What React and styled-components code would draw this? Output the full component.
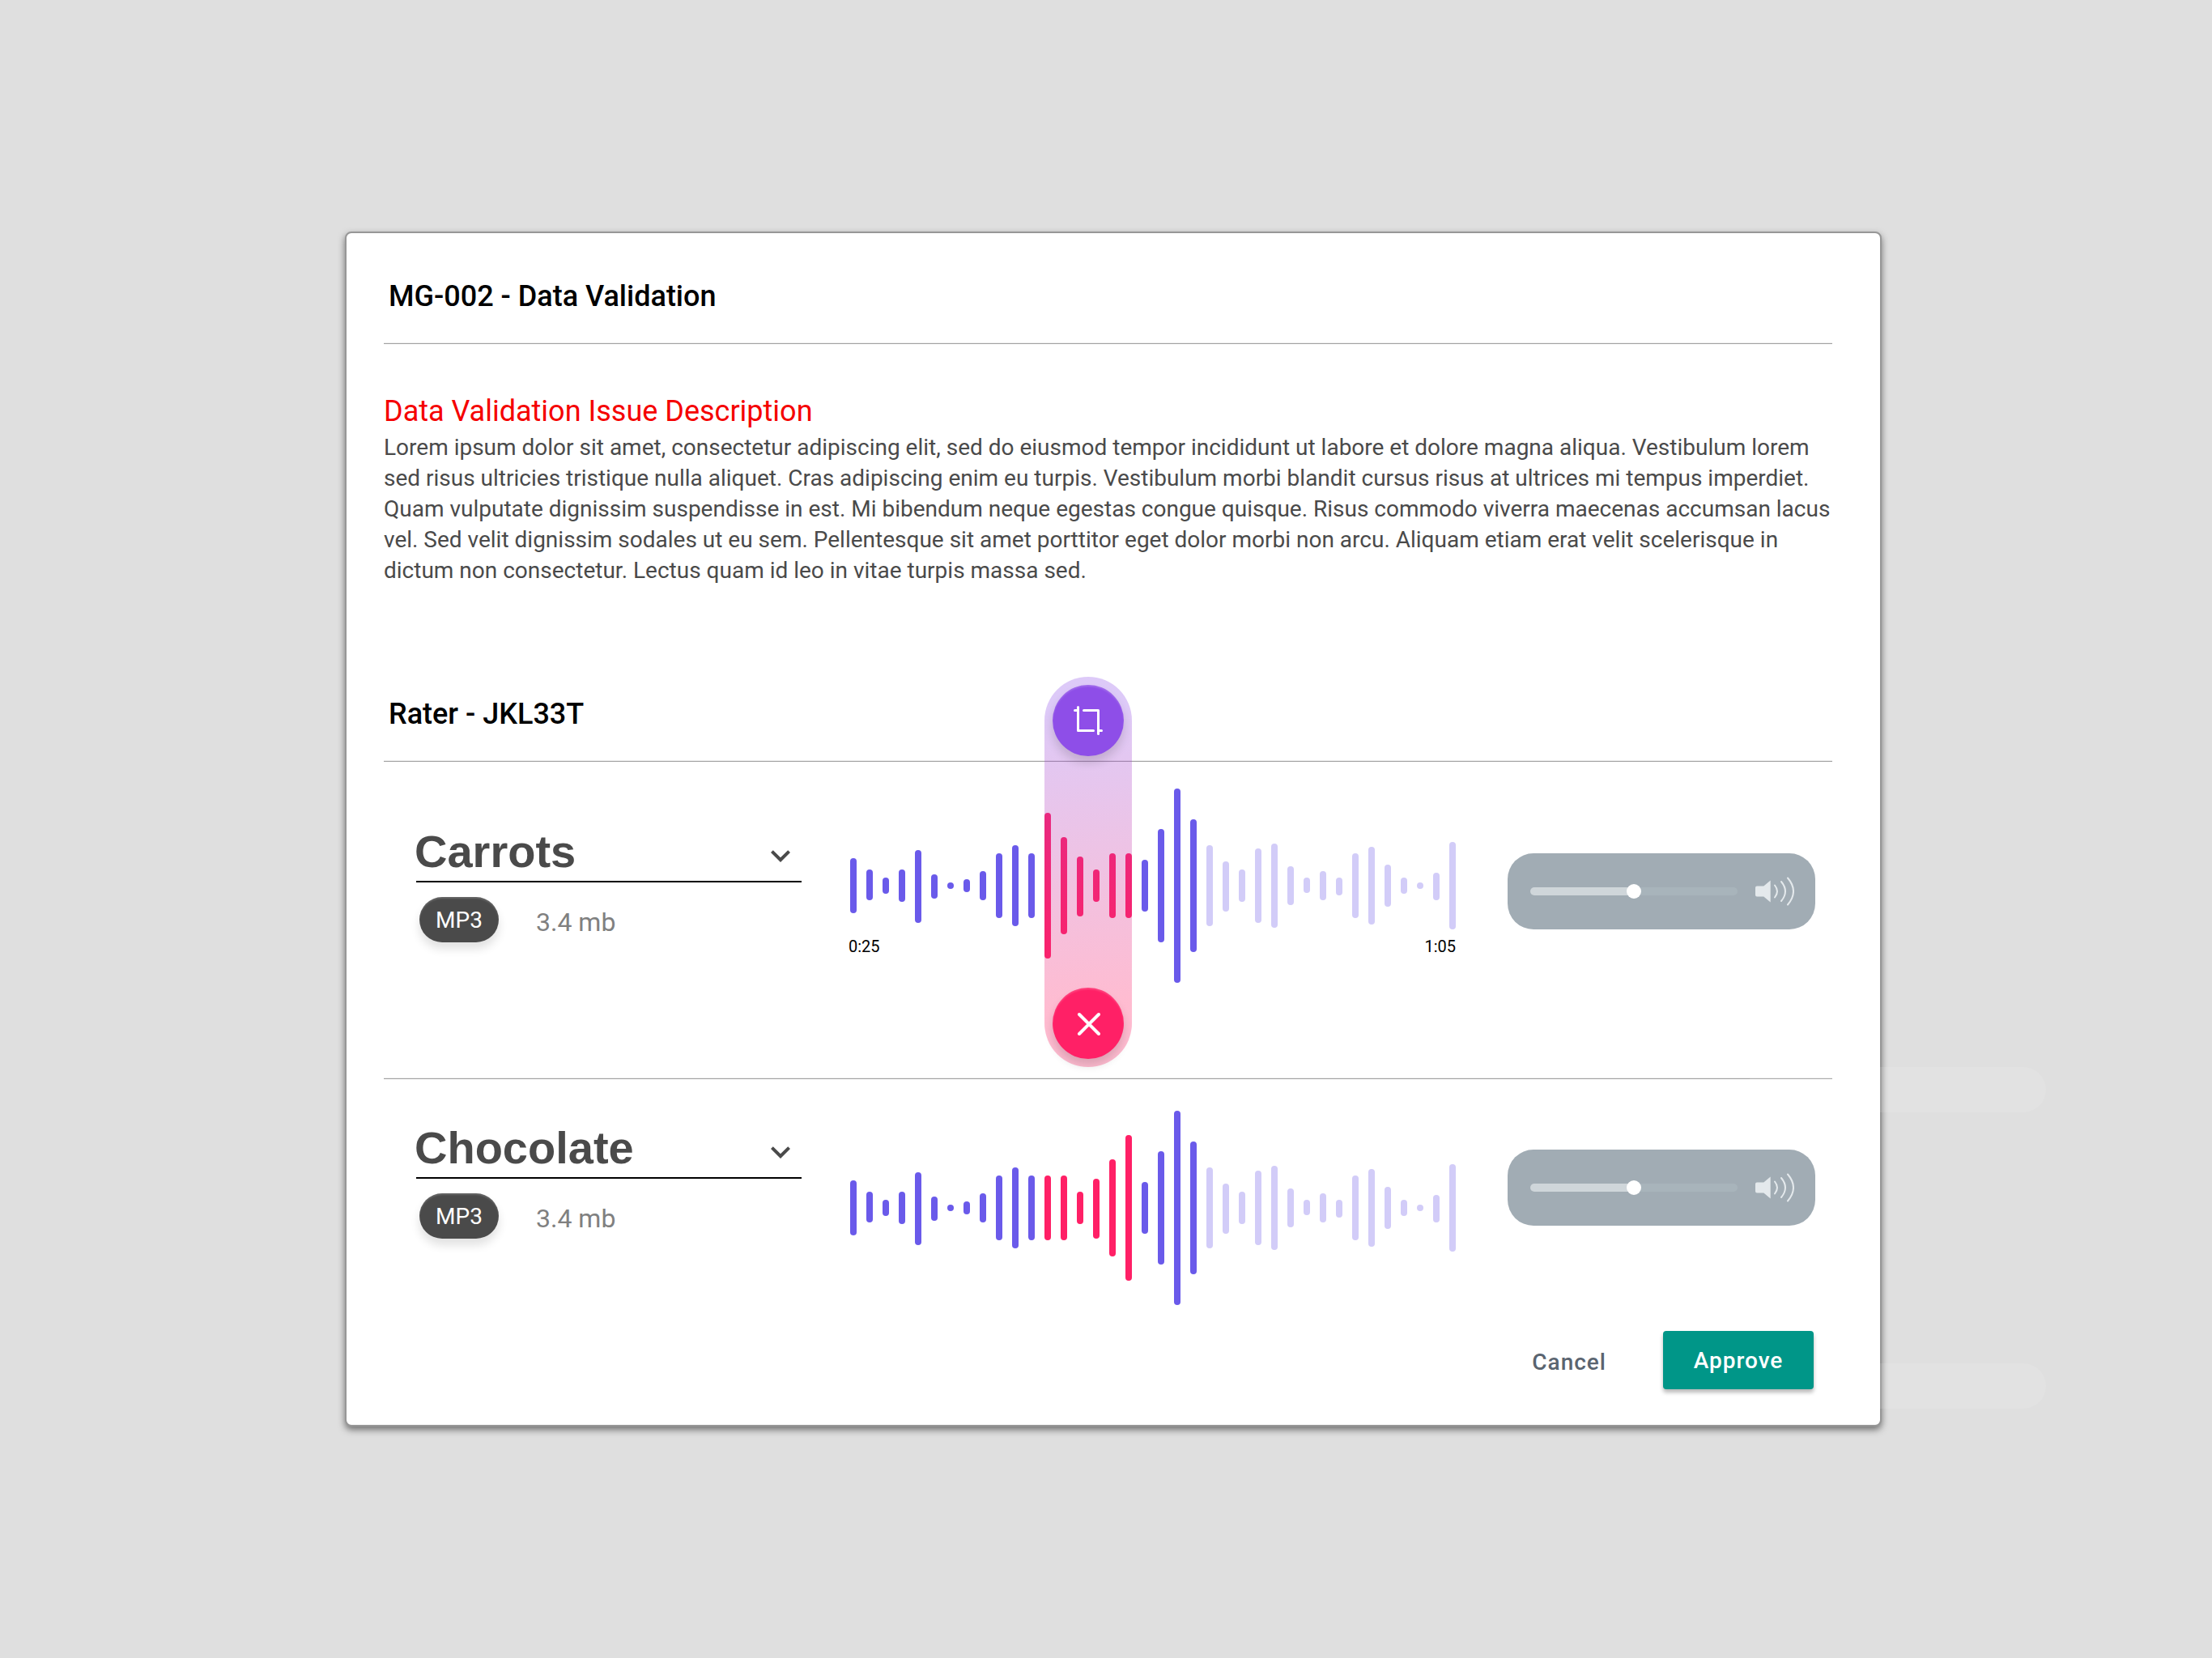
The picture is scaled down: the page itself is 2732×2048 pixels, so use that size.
import React, { useState } from "react";
import styled, { createGlobalStyle, css } from "styled-components";

const GlobalStyle = createGlobalStyle`
  *, *::before, *::after { box-sizing: border-box; }
  body {
    margin: 0;
    background: #dfdfdf;
    font-family: Roboto, "Liberation Sans", sans-serif;
    color: #4a4a4a;
  }
  h1, h2, p { margin: 0; }
`;

const Page = styled.main`
  min-height: 100vh;
  padding: 286px 408px 286px 426px;
`;

const Dialog = styled.section`
  display: flex;
  flex-direction: column;
  padding: 56px 59px 44px 46px;
  background: #fff;
  border: 2px solid #979797;
  border-radius: 8px;
  box-shadow: 0 4px 8px rgba(0, 0, 0, 0.5);
`;

const ruled = css`
  border-bottom: 1px solid #a2a2a2;
  box-shadow: inset 0 -1px 0 #ececec;
`;

const SectionTitle = styled.h1`
  padding: 0 6px 36px;
  font-size: 36px;
  line-height: 44px;
  font-weight: 500;
  color: #000;
  ${ruled}
`;

const Issue = styled.section`
  display: flex;
  flex-direction: column;
  gap: 4px;
  padding: 61px 0 136px;
`;

const IssueTitle = styled.h2`
  font-size: 36px;
  line-height: 44px;
  font-weight: 400;
  color: #f50000;
`;

const IssueText = styled.p`
  font-size: 28px;
  line-height: 38px;
`;

const TrackList = styled.div`
  display: flex;
  flex-direction: column;
`;

const Track = styled.article`
  display: grid;
  grid-template-columns: minmax(0, 1fr) 756px 380px;
  align-items: start;
  column-gap: 58px;
  padding: 39px 21px 0 40px;
  --side-inset: 14px;

  ${(p) =>
    p.$editing &&
    css`
      padding-top: 33px;
      padding-bottom: 118px;
      --side-inset: 46px;
      ${ruled}
    `}
`;

const TrackInfo = styled.div`
  display: flex;
  flex-direction: column;
  gap: 18px;
  padding-top: var(--side-inset);
`;

const Field = styled.label`
  display: grid;
  grid-template-columns: minmax(0, 1fr);
  border-bottom: 2px solid #000;
`;

const FoodSelect = styled.select`
  grid-area: 1 / 1;
  height: 68px;
  margin: 0 0 0 -2px;
  padding: 0 0 4px;
  appearance: none;
  border: 0;
  border-radius: 0;
  background: transparent;
  color: #4a4a4a;
  font: bold 56px/64px "Liberation Sans", Arial, sans-serif;
`;

const Chevron = styled.svg`
  grid-area: 1 / 1;
  place-self: end;
  width: 48px;
  height: 48px;
  margin: 0 2px 7px 0;
  fill: #4a4a4a;
  pointer-events: none;
`;

const Meta = styled.div`
  display: flex;
  gap: 46px;
  padding-left: 4px;
`;

const Badge = styled.span`
  display: flex;
  align-items: center;
  justify-content: center;
  width: 98px;
  height: 56px;
  border-radius: 28px;
  background: #4a4a4a;
  color: #fff;
  font-size: 28px;
  box-shadow: 0 8px 12px rgba(0, 0, 0, 0.12), inset 0 2px 2px rgba(255, 255, 255, 0.16);
`;

const FileSize = styled.span`
  padding-top: 3px;
  font-size: 32px;
  line-height: 56px;
  color: #808080;
`;

const Stage = styled.div`
  position: relative;
  display: grid;
  padding-right: 4px;
`;

const Wave = styled.svg`
  grid-area: 1 / 1;
  display: block;
  width: 748px;
  height: 240px;
  margin: 0 2px;
`;

const Times = styled.div`
  grid-area: 1 / 1;
  align-self: end;
  display: flex;
  justify-content: space-between;
  padding: 0 2px 33px 0;
  font-size: 20px;
  line-height: 24px;
  color: #000;
`;

const Selection = styled.div`
  position: absolute;
  top: -138px;
  left: ${(p) => p.$from * 20 + 2}px;
  width: ${(p) => p.$bars * 20 - 12}px;
  height: 482px;
  display: flex;
  flex-direction: column;
  align-items: center;
  justify-content: space-between;
  padding: 10px 0;
  border-radius: 54px;
  background: linear-gradient(175deg, rgba(142, 78, 232, 0.3) 8%, rgba(255, 32, 101, 0.3) 84%);
`;

const RoundButton = styled.button`
  display: grid;
  place-items: center;
  width: 88px;
  height: 88px;
  padding: 0;
  border: 0;
  border-radius: 50%;
  background: ${(p) => p.$color};
  box-shadow: 0 8px 12px rgba(0, 0, 0, 0.14), inset 0 2px 2px rgba(255, 255, 255, 0.16);

  svg {
    display: block;
    fill: none;
    stroke: #fff;
    stroke-linecap: round;
    stroke-linejoin: round;
  }
`;

const VolumeColumn = styled.div`
  position: relative;
  margin-top: calc(var(--side-inset) + 34px);

  &::after {
    content: "";
    position: absolute;
    top: 264px;
    left: 295px;
    width: 370px;
    height: 56px;
    border-radius: 28px;
    background: rgba(255, 255, 255, 0.1);
    pointer-events: none;
  }
`;

const Volume = styled.label`
  display: flex;
  align-items: center;
  gap: 22px;
  height: 94px;
  padding: 0 26px 0 28px;
  border-radius: 32px;
  background: #a1acb4;
`;

const Slider = styled.input`
  flex: 1;
  min-width: 0;
  height: 18px;
  margin: 0;
  appearance: none;
  background: transparent;

  &::-webkit-slider-runnable-track {
    height: 10px;
    border-radius: 5px;
    background: linear-gradient(
      to right,
      #cfd6da ${(p) => p.value}%,
      #a8b4bb ${(p) => p.value}%
    );
  }

  &::-webkit-slider-thumb {
    appearance: none;
    width: 18px;
    height: 18px;
    margin-top: -4px;
    border-radius: 50%;
    background: #fff;
  }
`;

const Footer = styled.footer`
  position: relative;
  display: flex;
  align-items: flex-end;
  justify-content: flex-end;
  gap: 38px;
  padding: 32px 23px 0 0;
`;

const TextButton = styled.button`
  height: 68px;
  padding: 2px 32px 0;
  border: 0;
  background: transparent;
  color: #5a6470;
  font: 500 28px/32px Roboto, sans-serif;
  letter-spacing: 1px;
`;

const PrimaryButton = styled(TextButton)`
  width: 186px;
  height: 72px;
  border-radius: 4px;
  background: #009688;
  color: #fff;
  box-shadow: 0 4px 5px rgba(0, 0, 0, 0.28);
`;

const lead = [
  [86, 68], [100, 38], [110, 20], [100, 40], [76, 90], [106, 30],
  [116, 8], [112, 16], [102, 36], [80, 80], [70, 100], [80, 80],
];
const tail = [
  [88, 64], [50, 140], [0, 240], [38, 164], [70, 100], [90, 62], [100, 40],
  [74, 92], [68, 104], [96, 48], [110, 19], [102, 36], [110, 22], [80, 80],
  [72, 96], [94, 52], [110, 20], [116, 8], [104, 34], [66, 108],
];

const tracks = [
  {
    id: "carrots",
    food: "Carrots",
    format: "MP3",
    size: "3.4 mb",
    start: "0:25",
    end: "1:05",
    marked: [[30, 180], [60, 120], [84, 74], [100, 40], [80, 80], [80, 80]],
    editing: true,
  },
  {
    id: "chocolate",
    food: "Chocolate",
    format: "MP3",
    size: "3.4 mb",
    marked: [[80, 80], [80, 80], [100, 40], [84, 74], [60, 120], [30, 180]],
    editing: false,
  },
];

const MARK_START = lead.length;
const PLAYED_END = 22;

function barColor(index, markEnd) {
  if (index >= MARK_START && index < markEnd) return "#ff2066";
  return index < PLAYED_END ? "#6a5aea" : "#d2ccf8";
}

function WaveForm({ marked, label }) {
  const bars = [...lead, ...marked, ...tail];
  const markEnd = MARK_START + marked.length;
  return (
    <Wave viewBox="0 0 748 240" role="img" aria-label={label}>
      {bars.map(([y, height], i) => (
        <rect key={i} x={i * 20} y={y} width="8" height={height} rx="4" fill={barColor(i, markEnd)} />
      ))}
    </Wave>
  );
}

function SpeakerIcon() {
  return (
    <svg width="48" height="36" viewBox="0 0 48 36" aria-hidden="true">
      <path
        d="M2 11.500h8.300L18.700 4.500V31.500L10.300 24.500H2Q0 24.500 0 22.500V13.500Q0 11.500 2 11.500Z"
        fill="#e4e9ec"
      />
      <g fill="none" stroke="#e4e9ec" strokeWidth="2" strokeLinecap="round">
        <path d="M24 10.500Q30 18 24 25.500" />
        <path d="M32 6Q42 18 32 30" />
        <path d="M40 1.500Q54 18 40 34.500" />
      </g>
    </svg>
  );
}

function TrackRow({ track }) {
  const [food, setFood] = useState(track.food);
  const [volume, setVolume] = useState(50);
  return (
    <Track $editing={track.editing}>
      <TrackInfo>
        <Field htmlFor={`${track.id}-food`}>
          <FoodSelect
            id={`${track.id}-food`}
            aria-label="Food item"
            value={food}
            onChange={(e) => setFood(e.target.value)}
          >
            <option>Carrots</option>
            <option>Chocolate</option>
          </FoodSelect>
          <Chevron viewBox="0 0 24 24" aria-hidden="true">
            <path d="M16.590 8.590L12 13.170 7.410 8.590 6 10l6 6 6-6z" />
          </Chevron>
        </Field>
        <Meta>
          <Badge>{track.format}</Badge>
          <FileSize>{track.size}</FileSize>
        </Meta>
      </TrackInfo>

      <Stage>
        <WaveForm marked={track.marked} label={`${food} wave form`} />
        {track.editing && (
          <>
            <Times>
              <span>{track.start}</span>
              <span>{track.end}</span>
            </Times>
            <Selection $from={MARK_START} $bars={track.marked.length}>
              <RoundButton type="button" $color="#8e4ee8" aria-label="Crop selection">
                <svg width="36" height="36" viewBox="0 0 36 36" strokeWidth="3">
                  <path d="M5.500 1.500V30.500H24.500M1.500 5.500H5.500M12.500 5.500H30.500V34.500M30.500 30.500H34.500" />
                </svg>
              </RoundButton>
              <RoundButton type="button" $color="#ff2066" aria-label="Remove selection">
                <svg width="30" height="30" viewBox="0 0 30 30" strokeWidth="4">
                  <path d="M4 4L28 28M28 4L4 28" />
                </svg>
              </RoundButton>
            </Selection>
          </>
        )}
      </Stage>

      <VolumeColumn>
        <Volume htmlFor={`${track.id}-volume`}>
          <Slider
            id={`${track.id}-volume`}
            type="range"
            min="0"
            max="100"
            aria-label="Volume"
            value={volume}
            onChange={(e) => setVolume(Number(e.target.value))}
          />
          <SpeakerIcon />
        </Volume>
      </VolumeColumn>
    </Track>
  );
}

export default function App() {
  return (
    <>
      <GlobalStyle />
      <Page>
        <Dialog>
          <SectionTitle>MG-002 - Data Validation</SectionTitle>
          <Issue>
            <IssueTitle>Data Validation Issue Description</IssueTitle>
            <IssueText>
              Lorem ipsum dolor sit amet, consectetur adipiscing elit, sed do eiusmod tempor
              incididunt ut labore et dolore magna aliqua. Vestibulum lorem sed risus ultricies
              tristique nulla aliquet. Cras adipiscing enim eu turpis. Vestibulum morbi blandit
              cursus risus at ultrices mi tempus imperdiet. Quam vulputate dignissim suspendisse
              in est. Mi bibendum neque egestas congue quisque. Risus commodo viverra maecenas
              accumsan lacus vel. Sed velit dignissim sodales ut eu sem. Pellentesque sit amet
              porttitor eget dolor morbi non arcu. Aliquam etiam erat velit scelerisque in dictum
              non consectetur. Lectus quam id leo in vitae turpis massa sed.
            </IssueText>
          </Issue>
          <SectionTitle as="h2">Rater - JKL33T</SectionTitle>
          <TrackList>
            {tracks.map((track) => (
              <TrackRow key={track.id} track={track} />
            ))}
          </TrackList>
          <Footer>
            <TextButton type="button">Cancel</TextButton>
            <PrimaryButton type="button">Approve</PrimaryButton>
          </Footer>
        </Dialog>
      </Page>
    </>
  );
}
